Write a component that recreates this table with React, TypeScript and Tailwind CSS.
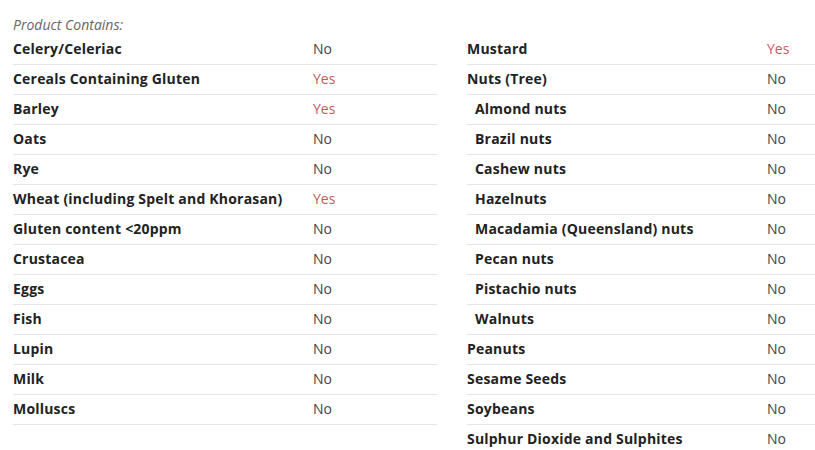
import React from 'react';

type Row = { label: string; value: 'Yes' | 'No'; sub?: boolean };

const left: Row[] = [
  { label: 'Celery/Celeriac', value: 'No' },
  { label: 'Cereals Containing Gluten', value: 'Yes' },
  { label: 'Barley', value: 'Yes' },
  { label: 'Oats', value: 'No' },
  { label: 'Rye', value: 'No' },
  { label: 'Wheat (including Spelt and Khorasan)', value: 'Yes' },
  { label: 'Gluten content <20ppm', value: 'No' },
  { label: 'Crustacea', value: 'No' },
  { label: 'Eggs', value: 'No' },
  { label: 'Fish', value: 'No' },
  { label: 'Lupin', value: 'No' },
  { label: 'Milk', value: 'No' },
  { label: 'Molluscs', value: 'No' },
];

const right: Row[] = [
  { label: 'Mustard', value: 'Yes' },
  { label: 'Nuts (Tree)', value: 'No' },
  { label: 'Almond nuts', value: 'No', sub: true },
  { label: 'Brazil nuts', value: 'No', sub: true },
  { label: 'Cashew nuts', value: 'No', sub: true },
  { label: 'Hazelnuts', value: 'No', sub: true },
  { label: 'Macadamia (Queensland) nuts', value: 'No', sub: true },
  { label: 'Pecan nuts', value: 'No', sub: true },
  { label: 'Pistachio nuts', value: 'No', sub: true },
  { label: 'Walnuts', value: 'No', sub: true },
  { label: 'Peanuts', value: 'No' },
  { label: 'Sesame Seeds', value: 'No' },
  { label: 'Soybeans', value: 'No' },
  { label: 'Sulphur Dioxide and Sulphites', value: 'No' },
];

function AllergenList({ rows }: { rows: Row[] }) {
  return (
    <div className="flex flex-col">
      {rows.map((row) => (
        <div
          key={row.label}
          className="flex h-[30px] items-center border-b border-[#e6e6e6] pb-[2px]"
        >
          <span
            className={`w-[300px] font-bold tracking-[0.2px] text-[#222] ${row.sub ? 'pl-2' : ''}`}
          >
            {row.label}
          </span>
          <span className={row.value === 'Yes' ? 'text-[#c9595b]' : 'text-[#444]'}>
            {row.value}
          </span>
        </div>
      ))}
    </div>
  );
}

export default function App() {
  return (
    <div
      className="h-[450px] w-[815px] overflow-hidden bg-white pt-[15px] pl-[13px] text-[14px] leading-[20px]"
      style={{ fontFamily: '"Open Sans", sans-serif' }}
    >
      <p className="italic text-[#666]">Product Contains:</p>
      <div className="flex gap-[30px]">
        <div className="w-[424px] shrink-0">
          <AllergenList rows={left} />
        </div>
        <div className="flex-1">
          <AllergenList rows={right} />
        </div>
      </div>
    </div>
  );
}
